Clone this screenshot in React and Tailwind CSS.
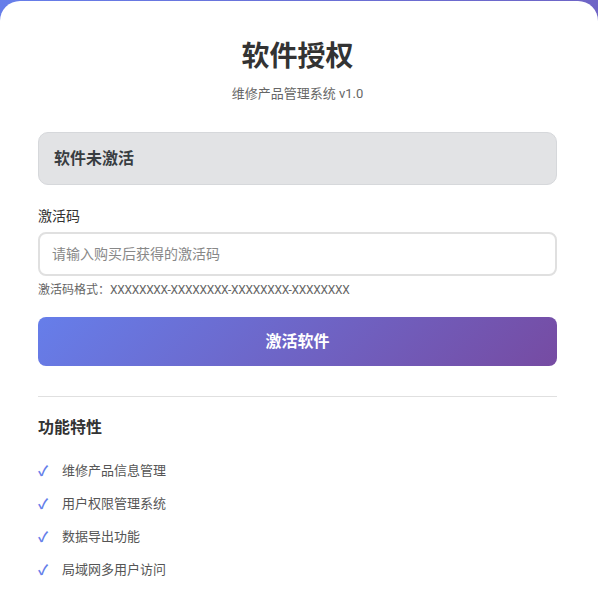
export default function App() {
  const features = ["维修产品信息管理", "用户权限管理系统", "数据导出功能", "局域网多用户访问"];

  return (
    <div className="min-h-[591px] bg-[linear-gradient(135deg,#667eea_0%,#764ba2_100%)] pt-px font-['Roboto','Noto_Sans_CJK_SC',sans-serif]">
      <div className="min-h-[590px] rounded-t-[20px] bg-white pl-[38px] pr-[41px] pt-[36px] pb-4">
        {/* ── Header ─────────────────────────────── */}
        <h1 className="text-center text-[28px] font-bold leading-[40px] text-[#333]">软件授权</h1>
        <p className="mt-[8px] text-center text-[13px] leading-[18px] text-[#666]">维修产品管理系统 v1.0</p>

        {/* ── Status ─────────────────────────────── */}
        <div className="mt-[29px] flex h-[53px] items-center rounded-[10px] border border-[#d6d8db] bg-[#e2e3e5] px-[15px]">
          <span className="text-[16px] font-bold text-[#383d41]">软件未激活</span>
        </div>

        {/* ── Form ───────────────────────────────── */}
        <label className="mt-[21px] block text-[14px] leading-[20px] text-[#333]">激活码</label>
        <input
          type="text"
          placeholder="请输入购买后获得的激活码"
          className="mt-[6px] block h-[44px] w-full rounded-[8px] border-2 border-[#e0e0e0] px-[12px] text-[14px] text-[#333] outline-none placeholder:text-[#888]"
        />
        <p className="mt-[6px] text-[12px] leading-[16px] text-[#666]">
          激活码格式：<span className="tracking-[-0.3px]">XXXXXXXX-XXXXXXXX-XXXXXXXX-XXXXXXXX</span>
        </p>

        <button className="mt-[19px] flex h-[49px] w-full items-center justify-center rounded-[8px] bg-[linear-gradient(135deg,#667eea_0%,#764ba2_100%)] text-[16px] font-bold text-white">
          激活软件
        </button>

        <div className="mt-[30px] border-t border-[#e0e0e0]" />

        {/* ── Features ───────────────────────────── */}
        <h3 className="mt-[20px] text-[16px] font-bold leading-[22px] text-[#333]">功能特性</h3>
        <ul className="mt-[22px] flex flex-col gap-[13px]">
          {features.map((f) => (
            <li key={f} className="flex items-center text-[13px] leading-[20px] text-[#555]">
              <span className="w-[24px] text-[14px] font-bold text-[#667eea]">✓</span>
              {f}
            </li>
          ))}
        </ul>
      </div>
    </div>
  );
}
